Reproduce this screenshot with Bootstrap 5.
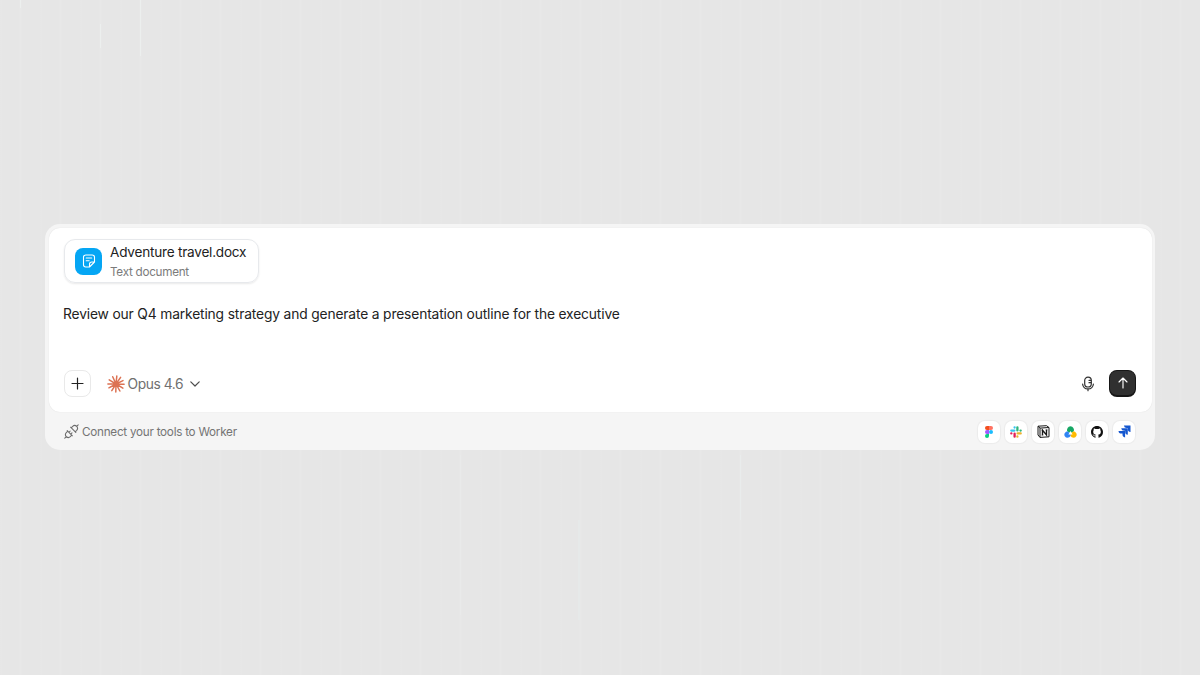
<!DOCTYPE html>
<html lang="en">
<head>
<meta charset="utf-8">
<meta name="viewport" content="width=device-width, initial-scale=1">
<title>Worker</title>
<link href="https://cdn.jsdelivr.net/npm/bootstrap@5.3.0/dist/css/bootstrap.min.css" rel="stylesheet">
<style>
body{font-family:Inter,"Liberation Sans",sans-serif;color:#222;overflow:hidden;
background:
linear-gradient(#ecefee,#ecefee) 100px 24px/1px 24px no-repeat,
linear-gradient(#ecefee,#ecefee) 140px 0/1px 56px no-repeat,
linear-gradient(#ecefee,#ecefee) 20px 0/1px 8px no-repeat,
linear-gradient(#e9eaea,#e9eaea) 460px 455px/1px 160px no-repeat,
linear-gradient(#e9ecec,#e9ecec) 740px 455px/1px 65px no-repeat,
linear-gradient(#e6e9e9,#e6e9e9) 578px 520px/2px 100px no-repeat,
repeating-linear-gradient(90deg,#e6e6e6 0,#e7e7e7 1px,#e6e6e6 3px,#e6e6e6 19px,#e8e8e8 20px,#e8e8e8 21px,#e6e6e6 22px,#e6e6e6 40px)}
svg{display:block;flex:none}
.shell{width:1110px;height:226px;margin-top:-1px;padding:4px 3px 0 4px;background:#f5f5f5;border-radius:15px}
.composer{height:184px;padding:11px 16px 15px 15px;background:#fff;border-radius:11px;box-shadow:0 0 1px rgba(0,0,0,.14)}
.file-chip{width:195px;height:44px;padding:0 10px;gap:8px;border:1px solid #e7e9ec;border-radius:11px;box-shadow:0 1px 2px rgba(0,0,0,.09)}
.file-icon{flex:none;width:27px;height:27px;border-radius:8px;background:#05a6f4}
.file-name{font-size:13.6px;letter-spacing:-.23px;line-height:18px;white-space:nowrap}
.file-type{font-size:11.7px;letter-spacing:-.27px;line-height:16px;margin-top:3px;margin-bottom:-1px;color:#7b7b7b}
.prompt{font-size:13.8px;letter-spacing:-.15px;line-height:20px;margin:21px 0 0 -1px;white-space:nowrap}
.add-btn{width:27px;height:27px;border:1px solid #e9e9e9;border-radius:8px;background:#fff}
.model{margin-left:15.5px;font-size:13.8px;letter-spacing:-.4px;color:#707070;line-height:20px}
.model-name{margin-left:3px;margin-right:7px}
.mic{margin-right:15px}
.send-btn{width:27px;height:27px;border-radius:8px;background:#303030;border:1px solid #161616;border-bottom-width:2px}
.tools{height:38px;padding:1px 16.6px 0 14.5px}
.tools-text{margin-left:3.5px;font-size:11.7px;letter-spacing:-.25px;color:#747474;line-height:16px}
.tool-list{gap:5px}
.tool{width:22px;height:22px;border-radius:7px;background:#fff;box-shadow:0 0 1px 1px rgba(0,0,0,.04)}
</style>
</head>
<body class="vh-100 d-flex align-items-center justify-content-center">
<main class="shell">
  <section class="composer d-flex flex-column">
    <div class="file-chip d-flex align-items-center">
      <div class="file-icon d-flex align-items-center justify-content-center">
        <svg width="16" height="16" viewBox="0 0 16 16" fill="none" stroke="#fff" stroke-width="1.1" stroke-linecap="round" stroke-linejoin="round"><path d="M8.5 14H4.7Q2.5 14 2.5 11.8V4.2Q2.5 2 4.7 2h6.6q2.2 0 2.2 2.2V9L8.5 14v-2.7Q8.5 9 10.8 9h2.7M5.2 5h5.5M5.2 7.7h3"/></svg>
      </div>
      <div>
        <div class="file-name">Adventure travel.docx</div>
        <div class="file-type">Text document</div>
      </div>
    </div>
    <p class="prompt">Review our Q4 marketing strategy and generate a presentation outline for the executive</p>
    <div class="d-flex align-items-center mt-auto">
      <button class="add-btn p-0 d-flex align-items-center justify-content-center" aria-label="Add">
        <svg width="13" height="13" viewBox="0 0 13 13" stroke="#222" stroke-width="1.2" stroke-linecap="round"><path d="M6.5 1v11M1 6.5h11"/></svg>
      </button>
      <div class="model d-flex align-items-center">
        <svg width="18" height="18" viewBox="-9 -9 18 18" stroke="#dc7253" stroke-width="1.5" stroke-linecap="round"><path d="M0 0L.8-7.9M0 0L4.6-6.7M0 0L7-3.4M0 0L8.1.3M0 0L6.9 4.1M0 0L3.9 7M0 0L-.2 8M0 0L-4.2 6.6M0 0L-7.1 3.8M0 0L-8.100 0M0 0L-6.800-4.100M0 0L-3.300-7.300"/></svg>
        <span class="model-name">Opus 4.6</span>
        <svg width="10" height="6" viewBox="0 0 10 6" fill="none" stroke="#4d4d4d" stroke-width="1.2" stroke-linecap="round" stroke-linejoin="round"><path d="M.8.8L5 5 9.200.8"/></svg>
      </div>
      <svg class="mic ms-auto" width="12" height="16" viewBox="0 0 12 16" fill="none" stroke="#303030" stroke-width="1.200" stroke-linecap="round"><rect x="2.700" y="1.200" width="6.600" height="9.800" rx="3.300"/><path d="M.6 8C1.300 14.600 10.700 14.600 11.400 8M6 13.200v1.500M7 4.300h2M7 6.700h2"/></svg>
      <button class="send-btn p-0 d-flex align-items-center justify-content-center" aria-label="Send">
        <svg width="12" height="12" viewBox="0 0 12 12" fill="none" stroke="#fff" stroke-width="1.150" stroke-linecap="round" stroke-linejoin="round"><path d="M6 11V1M2 5l4-4 4 4"/></svg>
      </button>
    </div>
  </section>
  <footer class="tools d-flex align-items-center">
    <svg width="15" height="15" viewBox="0 0 15 15" fill="none" stroke="#6c6c6c" stroke-width="1.050" stroke-linecap="round" stroke-linejoin="round"><path d="M.8 14.200l1.500-1.500M14.200.8l-1.500 1.500M3.200 6.600l5.200 5.200M3.800 7.200L2.300 8.700a2.830 2.830 0 004 4l1.500-1.500M6.600 3.200l5.200 5.200M7.200 3.800l1.500-1.500a2.830 2.830 0 014 4l-1.500 1.500M4.900 8.300l1.300-1.300M6.700 10.100l1.300-1.300"/></svg>
    <span class="tools-text">Connect your tools to Worker</span>
    <div class="tool-list d-flex ms-auto">
      <div class="tool d-flex align-items-center justify-content-center"><svg width="12" height="12" viewBox="0 0 12 12"><path fill="#f24e1e" d="M6 0H4a2 2 0 000 4h2z"/><path fill="#ff7262" d="M6 0h2a2 2 0 010 4H6z"/><path fill="#a259ff" d="M6 4H4a2 2 0 000 4h2z"/><circle cx="8" cy="6" r="2" fill="#1abcfe"/><path fill="#0acf83" d="M6 8H4a2 2 0 102 2z"/></svg></div>
      <div class="tool d-flex align-items-center justify-content-center"><svg width="12" height="12" viewBox="0 0 12 12" fill="none" stroke-width="2.300" stroke-linecap="round"><path stroke="#36c5f0" d="M1.300 4.600h3.100M4.600 1.400v.2"/><path stroke="#2eb67d" d="M7.400 1.300v3.100M10.500 4.600h.2"/><path stroke="#ecb22e" d="M10.700 7.400H7.600M7.400 10.500v.2"/><path stroke="#e01e5a" d="M4.600 10.700V7.600M1.400 7.400h-.1"/></svg></div>
      <div class="tool d-flex align-items-center justify-content-center"><svg width="13" height="13" viewBox="0 0 13 13" fill="none" stroke="#171717"><path d="M1 1.200L9.500.7 12 2.500v9.300L3 12.400 1 10zM1 1.200l2 1.900v9.300M3 3.100l9-.6" stroke-width="1" stroke-linejoin="round"/><path d="M5.500 10V5.200l4 4.700V4.800" stroke-width="1.350"/><path d="M4.500 5.200h1.300M8.600 4.900h1.900M4.600 10.200h1.700" stroke-width=".7"/></svg></div>
      <div class="tool d-flex align-items-center justify-content-center"><svg width="13" height="12" viewBox="0 0 13 12"><path fill="#16a765" d="M3.200 5.300Q2.600 3.700 3.600 2 4.600.3 6.500.3T9.400 2q1 1.700.4 3.300L6.500 7.200z"/><path fill="#ffba00" d="M6.500 7.200l3.300-1.900q1.700.4 2.500 1.900.8 1.600-.1 3-1 1.500-2.800 1.500-2 0-2.900-1.700z"/><path fill="#3084f4" d="M6.500 7.200L3.200 5.300Q1.500 5.700.7 7.200q-.8 1.600.1 3 1 1.500 2.800 1.500 2 0 2.900-1.700z"/><path fill="#fff" d="M6.500 4.900l2.100 3.500H4.400z"/></svg></div>
      <div class="tool d-flex align-items-center justify-content-center"><svg width="12" height="12" viewBox="0 0 16 16" fill="#111"><path d="M8 0C3.580 0 0 3.580 0 8c0 3.540 2.290 6.530 5.470 7.590.4.070.55-.17.55-.38 0-.19-.01-.82-.01-1.490-2.010.37-2.530-.49-2.690-.94-.09-.23-.48-.94-.82-1.130-.28-.15-.68-.52-.01-.53.63-.01 1.080.58 1.230.82.72 1.210 1.870.87 2.330.66.07-.52.28-.87.51-1.070-1.780-.2-3.640-.89-3.640-3.950 0-.87.31-1.590.82-2.150-.08-.2-.36-1.020.08-2.120 0 0 .67-.21 2.200.82.64-.18 1.320-.27 2-.27s1.360.09 2 .27c1.530-1.040 2.200-.82 2.200-.82.44 1.100.16 1.920.08 2.120.51.56.82 1.270.82 2.150 0 3.070-1.870 3.750-3.650 3.950.29.25.54.73.54 1.480 0 1.070-.01 1.930-.01 2.200 0 .21.15.46.55.38A8.010 8.010 0 0016 8c0-4.420-3.580-8-8-8z"/></svg></div>
      <div class="tool d-flex align-items-center justify-content-center"><svg width="13" height="13" viewBox="0 0 13 13" fill="#1557cf"><path d="M5.900.5h6.600v6.600Q9.900 6.800 9.900 4.200V3.100H8.800Q6.200 3.100 5.900.5z"/><path d="M3.200 3.200h6.600v6.600Q7.200 9.500 7.200 6.900V5.800H6.100Q3.500 5.800 3.200 3.200z"/><path d="M.5 5.900h6.600v6.600Q4.500 12.200 4.500 9.600V8.500H3.400Q.8 8.500.5 5.900z"/></svg></div>
    </div>
  </footer>
</main>
<script src="https://cdn.jsdelivr.net/npm/bootstrap@5.3.0/dist/js/bootstrap.bundle.min.js"></script>
</body>
</html>
